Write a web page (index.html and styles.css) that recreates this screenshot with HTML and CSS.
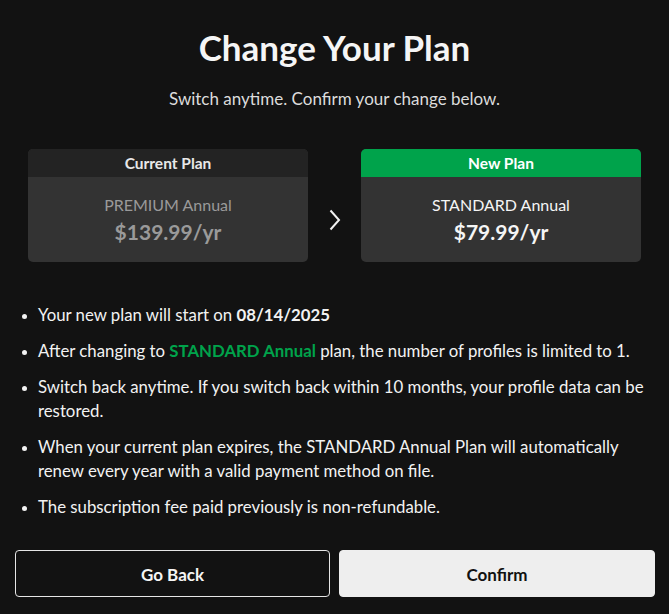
FILE: index.html
```html
<!DOCTYPE html>
<html lang="en">
<head>
<meta charset="utf-8">
<title>Change Your Plan</title>
<link rel="stylesheet" href="styles.css">
</head>
<body>
<main class="page">
  <h1 class="title">Change Your Plan</h1>
  <p class="subtitle">Switch anytime. Confirm your change below.</p>

  <section class="plans">
    <div class="plan">
      <div class="plan-head">Current Plan</div>
      <div class="plan-body plan-body--muted">
        <div class="plan-name">PREMIUM Annual</div>
        <div class="plan-price">$139.99/yr</div>
      </div>
    </div>
    <div class="arrow">
      <svg width="12" height="22" viewBox="0 0 12 22" aria-hidden="true"><path d="M1.5 1.5 L10 11 L1.5 20.5" fill="none" stroke="#f2f2f2" stroke-width="2"/></svg>
    </div>
    <div class="plan">
      <div class="plan-head plan-head--new">New Plan</div>
      <div class="plan-body">
        <div class="plan-name">STANDARD Annual</div>
        <div class="plan-price">$79.99/yr</div>
      </div>
    </div>
  </section>

  <ul class="notes">
    <li>Your new plan will start on <strong>08/14/2025</strong></li>
    <li>After changing to <strong class="green">STANDARD Annual</strong> plan, the number of profiles is limited to 1.</li>
    <li>Switch back anytime. If you switch back within 10 months, your profile data can be restored.</li>
    <li>When your current plan expires, the STANDARD Annual Plan will automatically renew every year with a valid payment method on file.</li>
    <li>The subscription fee paid previously is non-refundable.</li>
  </ul>

  <div class="actions">
    <button class="btn btn--ghost">Go Back</button>
    <button class="btn btn--solid">Confirm</button>
  </div>
</main>
</body>
</html>
```

FILE: styles.css
```css
* { box-sizing: border-box; }
html, body {
  margin: 0;
  background: #121212;
  color: #f2f2f2;
  font-family: Lato, "Noto Sans", sans-serif;
}
.page {
  width: 669px;
  padding: 23px 15px 0 15px;
}
.title {
  margin: 0;
  text-align: center;
  font-size: 35px;
  font-weight: 700;
  line-height: 48px;
  color: #f5f5f5;
}
.subtitle {
  margin: 16px 0 0;
  text-align: center;
  font-size: 17px;
  line-height: 24px;
  color: #dcdcdc;
}
.plans {
  margin: 38px 13px 0;
  display: grid;
  grid-template-columns: 280px 1fr 280px;
  align-items: center;
}
.plan {
  border-radius: 5px;
  overflow: hidden;
  background: #333333;
}
.plan-head {
  height: 28px;
  line-height: 28px;
  text-align: center;
  font-size: 15.5px;
  font-weight: 700;
  background: #232323;
  color: #e8e8e8;
}
.plan-head--new {
  background: #00a34b;
  color: #ffffff;
}
.plan-body {
  height: 85px;
  display: flex;
  flex-direction: column;
  align-items: center;
  justify-content: center;
  padding-top: 2px;
  color: #f5f5f5;
}
.plan-body--muted { color: #9a9a9a; }
.plan-name {
  font-size: 16px;
  line-height: 22px;
}
.plan-price {
  font-size: 21px;
  font-weight: 700;
  line-height: 31px;
}
.arrow {
  display: flex;
  justify-content: center;
  padding-top: 28px;
}
.notes {
  margin: 41px 0 0;
  padding: 0 0 0 23px;
  font-size: 16.8px;
  line-height: 24px;
  color: #f2f2f2;
}
.notes li {
  margin-bottom: 12px;
}
.notes li::marker { font-size: 14px; }
.notes strong { font-weight: 700; }
.green { color: #00a34b; }
.actions {
  margin-top: 31px;
  display: grid;
  grid-template-columns: 315px 316px;
  gap: 9px;
}
.btn {
  height: 47px;
  padding: 2px 0 0;
  border-radius: 4px;
  font-family: inherit;
  font-size: 17px;
  font-weight: 700;
  cursor: pointer;
}
.btn--ghost {
  background: #121212;
  border: 1px solid #e6e6e6;
  color: #f5f5f5;
}
.btn--solid {
  background: #eeeeee;
  border: 1px solid #eeeeee;
  color: #111111;
}
```
